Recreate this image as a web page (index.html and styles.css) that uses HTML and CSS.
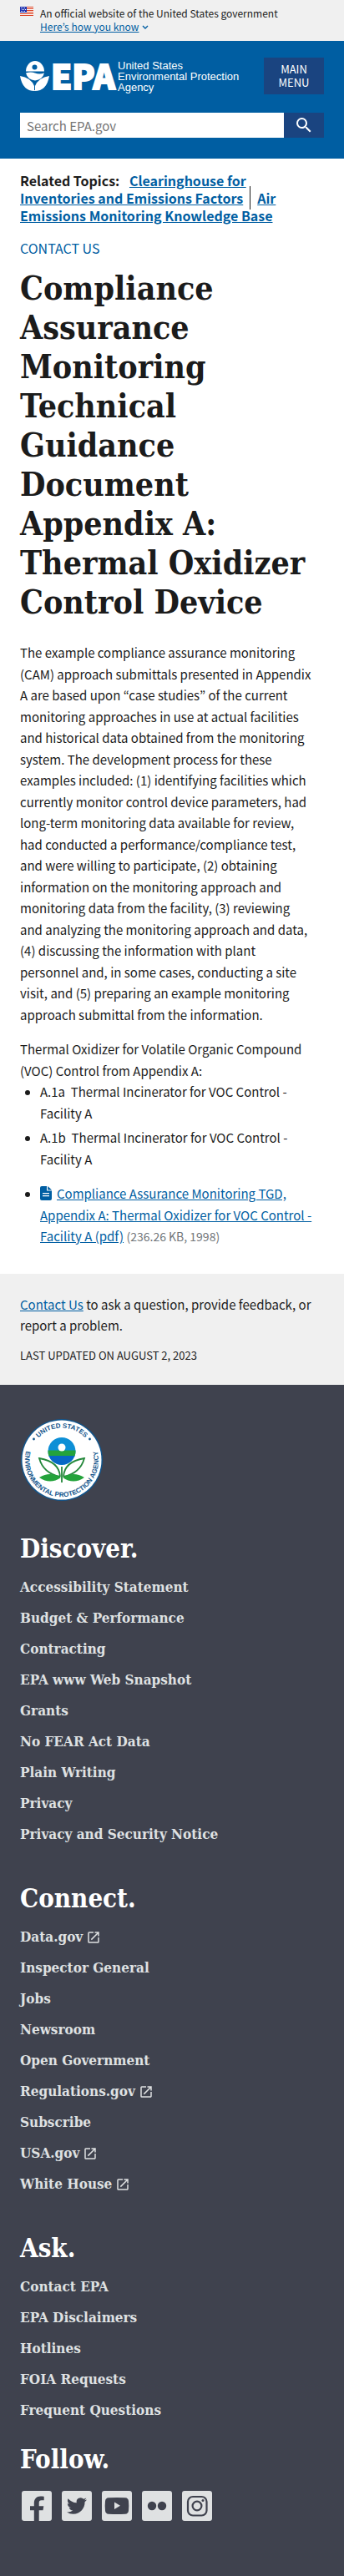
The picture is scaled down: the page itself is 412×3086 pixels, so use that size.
FILE: index.html
```html
<!DOCTYPE html>
<html lang="en">
<head>
<meta charset="utf-8">
<meta name="viewport" content="width=device-width, initial-scale=1">
<title>Compliance Assurance Monitoring Technical Guidance Document Appendix A | US EPA</title>
<link rel="stylesheet" href="styles.css">
</head>
<body>
<svg class="sprite" aria-hidden="true">
  <symbol id="external" viewBox="0 0 24 24"><path d="M19 19H5V5h7V3H5a2 2 0 00-2 2v14a2 2 0 002 2h14c1.1 0 2-.9 2-2v-7h-2v7zM14 3v2h3.59l-9.83 9.83 1.41 1.41L19 6.41V10h2V3h-7z"/></symbol>
</svg>

<section class="banner" aria-label="Official website of the United States government">
  <svg class="banner-flag" viewBox="0 0 16 11" aria-hidden="true">
    <path fill="#fff" d="M0 0h16v11H0z"/>
    <path fill="#db3e1f" d="M0 0h16v1H0zM0 2h16v1H0zM0 4h16v1H0zM0 6h16v1H0zM0 8h16v1H0zM0 10h16v1H0z"/>
    <path fill="#1e33b1" d="M0 0h8v7H0z"/>
    <path fill="#fff" d="M1 1h1v1H1zM3 1h1v1H3zM5 1h1v1H5zM2 3h1v1H2zM4 3h1v1H4zM6 3h1v1H6zM1 5h1v1H1zM3 5h1v1H3zM5 5h1v1H5z"/>
  </svg>
  <div class="banner-text">
    <p>An official website of the United States government</p>
    <button type="button" class="banner-button"><span>Here’s how you know</span><svg viewBox="0 0 8 5" aria-hidden="true"><path d="M1 1l3 3 3-3" fill="none" stroke="#005ea2" stroke-width="1.4"/></svg></button>
  </div>
</section>

<header class="header">
  <div class="header-row">
    <a class="logo" href="#" aria-label="Home">
      <svg viewBox="0 0 270 40" fill="#fff" aria-hidden="true">
        <path d="M7 12.500a11 12.500 0 0 1 22 0z"/>
        <circle cx="17.500" cy="7.500" r="3" fill="#005ea2"/>
        <path d="M7 14.500q6-2 11 0t11 0q-2 8-11 9-9-1-11-9z"/>
        <path d="M0 18q13 2 17 12l.5 6Q3 36 0 18zM35 18q-13 2-17 12l-.5 6Q32 36 35 18z"/>
        <path d="M17.500 25v10" stroke="#005ea2" stroke-width="1"/>
        <text class="logo-mark" x="37" y="34">EPA</text>
        <text class="logo-name" x="117" y="10">United States</text>
        <text class="logo-name" x="117" y="23">Environmental Protection</text>
        <text class="logo-name" x="117" y="36">Agency</text>
      </svg>
    </a>
    <button type="button" class="menu-button">MAIN MENU</button>
  </div>
  <form class="search" role="search">
    <input class="search-input" type="search" aria-label="Search EPA.gov" placeholder="Search EPA.gov">
    <button class="search-button" type="button" aria-label="Search"><svg viewBox="0 0 24 24" aria-hidden="true"><path fill="#fff" d="M15.500 14h-.79l-.28-.27A6.471 6.471 0 0016 9.500 6.500 6.500 0 109.500 16c1.610 0 3.090-.59 4.230-1.570l.27.28v.79l5 4.990L20.490 19l-4.990-5zm-6 0C7.010 14 5 11.990 5 9.500S7.010 5 9.500 5 14 7.010 14 9.500 11.990 14 9.500 14z"/></svg></button>
  </form>
</header>

<main class="main">
  <div class="related"><span class="related-label">Related Topics:</span> <a href="#">Clearinghouse for Inventories and Emissions Factors</a><span class="related-divider"></span><a href="#">Air Emissions Monitoring Knowledge Base</a></div>
  <a class="contact-top" href="#">CONTACT US</a>
  <h1>Compliance Assurance Monitoring Technical Guidance Document Appendix A: Thermal Oxidizer Control Device</h1>
  <p class="intro">The example compliance assurance monitoring (CAM) approach submittals presented in Appendix A are based upon “case studies” of the current monitoring approaches in use at actual facilities and historical data obtained from the monitoring system. The development process for these examples included: (1) identifying facilities which currently monitor control device parameters, had long-term monitoring data available for review, had conducted a performance/compliance test, and were willing to participate, (2) obtaining information on the monitoring approach and monitoring data from the facility, (3) reviewing and analyzing the monitoring approach and data, (4) discussing the information with plant personnel and, in some cases, conducting a site visit, and (5) preparing an example monitoring approach submittal from the information.</p>
  <p class="list-intro">Thermal Oxidizer for Volatile Organic Compound (VOC) Control from Appendix A:</p>
  <ul class="list">
    <li>A.1a&nbsp; Thermal Incinerator for VOC Control - Facility A</li>
    <li>A.1b&nbsp; Thermal Incinerator for VOC Control - Facility A</li>
  </ul>
  <ul class="list">
    <li><svg class="file-icon" viewBox="0 0 14 17" aria-hidden="true"><path fill="#005ea2" d="M2 0h6v5.500h6V15a2 2 0 0 1-2 2H2a2 2 0 0 1-2-2V2a2 2 0 0 1 2-2zM9.200 0L14 4.500H9.200z"/><path fill="#fff" d="M3 8h8v1.300H3zM3 11h8v1.300H3z"/></svg><a href="#">Compliance Assurance Monitoring TGD, Appendix A: Thermal Oxidizer for VOC Control - Facility A (pdf)</a> <span class="file-size">(236.26 KB, 1998)</span></li>
  </ul>
</main>

<section class="page-foot">
  <p><a href="#">Contact Us</a> to ask a question, provide feedback, or report a problem.</p>
  <p class="updated">LAST UPDATED ON AUGUST 2, 2023</p>
</section>

<footer class="footer">
  <svg class="seal" viewBox="0 0 100 100" role="img" aria-label="United States Environmental Protection Agency seal">
    <circle cx="50" cy="50" r="49" fill="#12558c"/>
    <circle cx="50" cy="50" r="47.500" fill="#fff"/>
    <defs>
      <path id="arc-top" d="M11.500 50a38.500 38.500 0 0 1 77 0"/>
      <path id="arc-bottom" d="M17.500 20.500A44 44 0 1 0 82.500 20.500"/>
    </defs>
    <text class="seal-text"><textPath href="#arc-top" startOffset="50%" text-anchor="middle">UNITED STATES</textPath></text>
    <text class="seal-text"><textPath href="#arc-bottom" startOffset="50%" text-anchor="middle">ENVIRONMENTAL PROTECTION AGENCY</textPath></text>
    <circle cx="16.500" cy="25" r="1.400" fill="#12558c"/><circle cx="83.500" cy="25" r="1.400" fill="#12558c"/>
    <circle cx="50" cy="39.500" r="16.500" fill="#0d8fd6"/>
    <path fill="#24a33b" d="M33.500 38.500h33a16.500 16.500 0 0 1-1 7h-31a16.500 16.500 0 0 1-1-7z"/>
    <path fill="#0767c5" d="M34.500 45h31a16.500 16.500 0 0 1-31 0z"/>
    <circle cx="50" cy="35" r="4.500" fill="#fff"/>
    <path d="M50 58v19M48 70Q47 52 23 48q5 18 25 22M52 70q1-18 25-22-5 18-25 22" fill="none" stroke="#24883b" stroke-width="1.800"/>
    <path fill="#24a33b" d="M23 71q13-8 26 0-13 9-26 0zM77 71q-13-8-26 0 13 9 26 0z"/>
  </svg>

  <nav class="foot-group" aria-label="Discover">
    <h2>Discover.</h2>
    <ul>
      <li><a href="#">Accessibility Statement</a></li>
      <li><a href="#">Budget &amp; Performance</a></li>
      <li><a href="#">Contracting</a></li>
      <li><a href="#">EPA www Web Snapshot</a></li>
      <li><a href="#">Grants</a></li>
      <li><a href="#">No FEAR Act Data</a></li>
      <li><a href="#">Plain Writing</a></li>
      <li><a href="#">Privacy</a></li>
      <li><a href="#">Privacy and Security Notice</a></li>
    </ul>
  </nav>
  <nav class="foot-group" aria-label="Connect">
    <h2>Connect.</h2>
    <ul>
      <li><a href="#">Data.gov<svg class="ext"><use href="#external"/></svg></a></li>
      <li><a href="#">Inspector General</a></li>
      <li><a href="#">Jobs</a></li>
      <li><a href="#">Newsroom</a></li>
      <li><a href="#">Open Government</a></li>
      <li><a href="#">Regulations.gov<svg class="ext"><use href="#external"/></svg></a></li>
      <li><a href="#">Subscribe</a></li>
      <li><a href="#">USA.gov<svg class="ext"><use href="#external"/></svg></a></li>
      <li><a href="#">White House<svg class="ext"><use href="#external"/></svg></a></li>
    </ul>
  </nav>
  <nav class="foot-group foot-group-last" aria-label="Ask">
    <h2>Ask.</h2>
    <ul>
      <li><a href="#">Contact EPA</a></li>
      <li><a href="#">EPA Disclaimers</a></li>
      <li><a href="#">Hotlines</a></li>
      <li><a href="#">FOIA Requests</a></li>
      <li><a href="#">Frequent Questions</a></li>
    </ul>
  </nav>
  <h2>Follow.</h2>
  <div class="social">
    <a href="#" aria-label="Facebook"><svg viewBox="0 0 36 36"><path d="M14.800 36V23.200H10v-5h4.800v-3.400c0-5.200 3-8.300 7.600-8.300 1.800 0 3.400.1 4.300.3v4.400h-2.900c-2.300 0-3.100 1.200-3.100 3v4h5.600l-.8 5h-4.800V36z"/></svg></a>
    <a href="#" aria-label="Twitter"><svg viewBox="-6 -6 36 36"><path d="M23.953 4.570a10 10 0 01-2.825.775 4.958 4.958 0 002.163-2.723c-.951.555-2.005.959-3.127 1.184a4.920 4.920 0 00-8.384 4.482C7.690 8.095 4.067 6.130 1.640 3.162a4.822 4.822 0 00-.666 2.475c0 1.710.87 3.213 2.188 4.096a4.904 4.904 0 01-2.228-.616v.06a4.923 4.923 0 003.946 4.827 4.996 4.996 0 01-2.212.085 4.936 4.936 0 004.604 3.417 9.867 9.867 0 01-6.102 2.105c-.39 0-.779-.023-1.170-.067a13.995 13.995 0 007.557 2.209c9.053 0 13.998-7.496 13.998-13.985 0-.21 0-.42-.015-.63A9.935 9.935 0 0024 4.590z"/></svg></a>
    <a href="#" aria-label="YouTube"><svg viewBox="0 0 36 36"><path fill-rule="evenodd" d="M8 8.300q10-.8 20 0 3.600.3 4 4 .6 5.700 0 11.400-.4 3.700-4 4-10 .8-20 0-3.600-.3-4-4-.6-5.700 0-11.400.4-3.700 4-4zM15 13.500v8.500l7-4.200z"/></svg></a>
    <a href="#" aria-label="Flickr"><svg viewBox="0 0 36 36"><circle cx="12" cy="18" r="5.200"/><circle cx="24" cy="18" r="5.200"/></svg></a>
    <a href="#" aria-label="Instagram"><svg viewBox="0 0 36 36"><g fill="none" stroke="#3f424e" stroke-width="2.200"><rect x="7" y="7" width="22.500" height="22.500" rx="6"/><circle cx="18" cy="18" r="5.400"/></g><circle cx="25" cy="11.500" r="1.500"/></svg></a>
  </div>
</footer>
</body>
</html>
```
FILE: styles.css
```css
* { box-sizing: border-box; }

body {
  margin: 0;
  background: #fff;
  color: #1b1b1b;
  font-family: "Noto Sans CJK KR", "Open Sans", sans-serif;
  font-size: 15px;
  line-height: 1.7;
}

p, h1, h2, ul { margin: 0; }
a { color: #005ea2; }
button { font-family: inherit; border: 0; padding: 0; cursor: pointer; }
.sprite { display: none; }

.banner {
  display: flex;
  gap: 8px;
  padding: 8px 24px 9px;
  background: #f0f0f0;
  font-size: 12px;
  line-height: 16px;
}
.banner-flag { width: 16px; height: 11px; flex: none; }
.banner-button {
  display: flex;
  align-items: center;
  gap: 4px;
  background: none;
  color: #005ea2;
  font-size: 12px;
  line-height: 16px;
}
.banner-button span { text-decoration: underline; }
.banner-button svg { width: 8px; height: 5px; }

.header { padding: 20px 24px 25px; background: #005ea2; }
.header-row { display: flex; justify-content: space-between; align-items: flex-start; gap: 8px; }
.logo { flex: 1; padding-top: 4px; }
.logo svg { display: block; width: 270px; height: 40px; }
.logo-mark {
  font-family: "Noto Sans CJK KR", sans-serif;
  font-size: 40px;
  font-weight: 900;
  stroke: #fff;
  stroke-width: 2px;
}
.logo-name { font-family: "Liberation Sans", sans-serif; font-size: 13px; }
.menu-button {
  width: 72px;
  padding: 6px 16px;
  background: #1a4480;
  color: #fff;
  font-size: 13px;
  line-height: 16px;
}
.search { display: flex; margin-top: 22px; }
.search-input {
  flex: 1;
  min-width: 0;
  height: 30px;
  padding: 0 8px;
  border: 0;
  border-radius: 0;
  background: #fff;
  font-family: inherit;
  font-size: 15px;
  appearance: none;
}
.search-input::placeholder { color: #757575; }
.search-button { display: flex; align-items: center; justify-content: center; width: 48px; background: #1a4480; }
.search-button svg { width: 24px; height: 24px; }

.main { padding: 16px 24px 28px; }
.related { padding-right: 12px; font-size: 16px; font-weight: 700; line-height: 21px; }
.related-label { margin-right: 8px; }
.related-divider { margin: 0 8px; border-left: 1px solid #1b1b1b; padding: 2px 0; }
.contact-top { display: block; margin-top: 16px; font-size: 16px; line-height: 25px; text-decoration: none; }
h1, .footer { font-family: "DejaVu Serif Condensed", "DejaVu Serif", serif; font-weight: 700; }
h1 { margin: 12px 0 24px; font-size: 39px; line-height: 47px; }
.intro { padding-right: 12px; }
.list-intro { margin-top: 16px; }
.list { padding-left: 24px; }
.list li { margin-bottom: 4px; }
.list + .list { margin-top: 16px; }
.file-icon { width: 14px; height: 17px; margin-right: 6px; vertical-align: -2px; }
.file-size { color: #71767a; font-size: 14px; }

.page-foot { padding: 24px; background: #f0f0f0; }
.updated { margin-top: 12px; font-size: 13px; }

.footer { padding: 40px 24px 67px; background: #3f424e; font-size: 17px; }
.seal { display: block; width: 100px; height: 100px; margin-bottom: 36px; }
.seal-text { fill: #12558c; font-family: "Liberation Sans", sans-serif; font-size: 8px; font-weight: 700; }
.footer h2 { margin-bottom: 8px; color: #fff; font-size: 31px; line-height: 40px; }
.foot-group { margin-bottom: 38px; }
.foot-group-last { margin-bottom: 20px; }
.foot-group ul { padding: 0; list-style: none; }
.foot-group li { line-height: 21px; padding: 8px 0; }
.foot-group a { color: #dfe1e2; text-decoration: none; }
.ext { width: 18px; height: 18px; margin-left: 4px; vertical-align: -4px; fill: #dfe1e2; }
.social { display: flex; gap: 12px; margin-top: 18px; padding-left: 2px; }
.social a { width: 36px; height: 36px; border-radius: 3px; background: #dfe1e2; fill: #3f424e; }
.social svg { display: block; }
```
